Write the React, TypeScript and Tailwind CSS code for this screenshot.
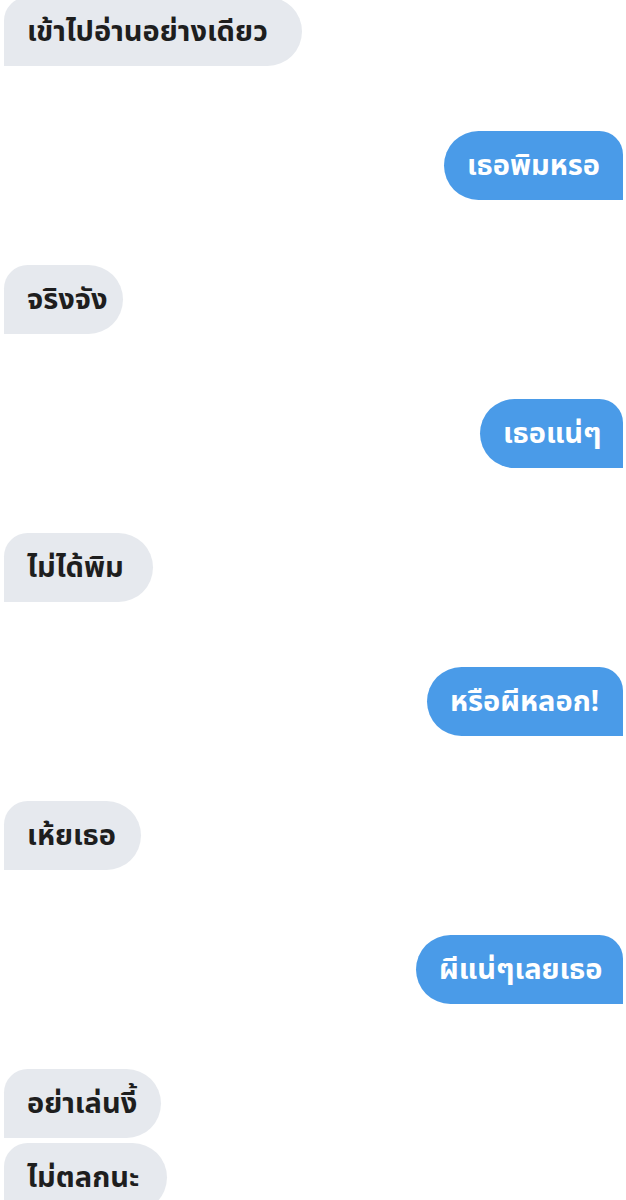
import React from "react";

type Msg = { text: string; me: boolean; gap: string; w: string };

const msgs: Msg[] = [
  { text: "เข้าไปอ่านอย่างเดียว", me: false, gap: "mt-[-3px]", w: "w-[298px]" },
  { text: "เธอพิมหรอ", me: true, gap: "mt-[65px]", w: "w-[179px]" },
  { text: "จริงจัง", me: false, gap: "mt-[65px]", w: "w-[119px]" },
  { text: "เธอแน่ๆ", me: true, gap: "mt-[65px]", w: "w-[143px]" },
  { text: "ไม่ได้พิม", me: false, gap: "mt-[65px]", w: "w-[149px]" },
  { text: "หรือผีหลอก!", me: true, gap: "mt-[65px]", w: "w-[196px]" },
  { text: "เห้ยเธอ", me: false, gap: "mt-[65px]", w: "w-[137px]" },
  { text: "ผีแน่ๆเลยเธอ", me: true, gap: "mt-[65px]", w: "w-[207px]" },
  { text: "อย่าเล่นงี้", me: false, gap: "mt-[65px]", w: "w-[157px]" },
  { text: "ไม่ตลกนะ", me: false, gap: "mt-[5px]", w: "w-[163px]" },
];

export default function App() {
  return (
    <div
      className="w-[626px] h-[1200px] overflow-hidden bg-white flex flex-col"
      style={{ fontFamily: '"Noto Sans Thai", "Noto Sans", "Noto Sans CJK SC", sans-serif' }}
    >
      {msgs.map((m, i) => (
        <div key={i} className={`flex ${m.me ? "justify-end pr-[3px]" : "justify-start pl-[4px]"} ${m.gap}`}>
          <div
            className={`${m.w} ${
              m.me
                ? "h-[69px] shrink-0 whitespace-nowrap flex items-center pl-[23px] pt-[3px] bg-[#4a9be8] text-white rounded-l-[35px] rounded-tr-[24px] text-[29px] font-bold"
                : "h-[69px] shrink-0 whitespace-nowrap flex items-center pl-[23px] pt-[3px] bg-[#e6e9ee] text-[#1e1e1e] rounded-r-[35px] rounded-tl-[24px] text-[29px] font-bold"
            }`}
          >
            {m.text}
          </div>
        </div>
      ))}
    </div>
  );
}
